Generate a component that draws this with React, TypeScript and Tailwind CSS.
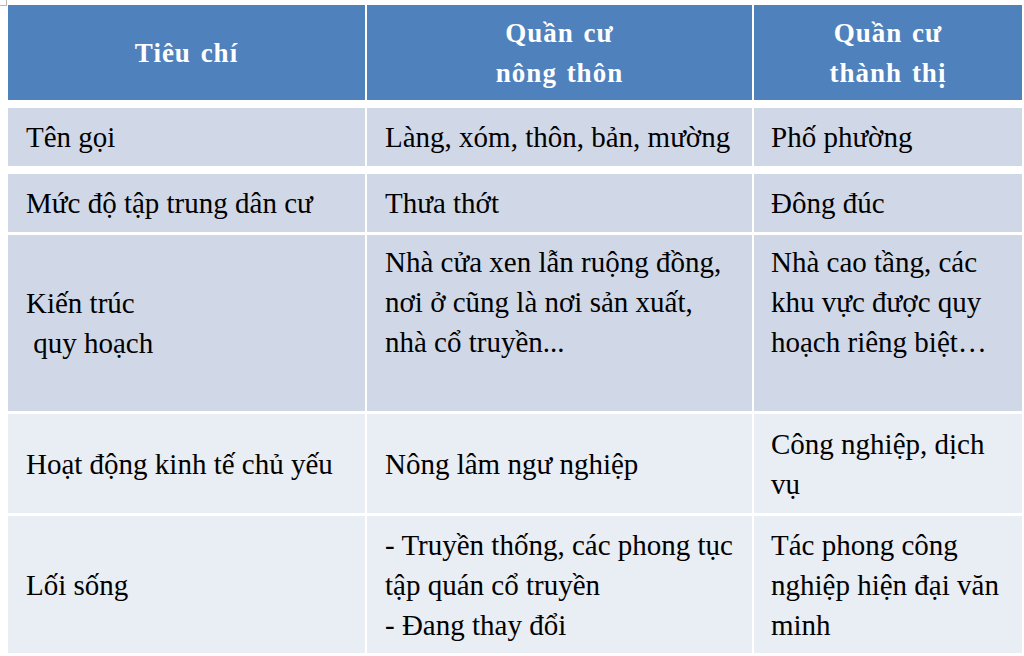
import React from 'react';

// ── Data ──────────────────────────────────────────────────────────────────

type Align = 'middle' | 'top';

interface Row {
  height: string;
  gap: string;
  bg: string;
  criterion: string[];
  rural: string[];
  urban: string[];
  align?: Align;
}

const ROWS: Row[] = [
  { height: 'h-[58px]', gap: 'mt-[8px]', bg: 'bg-[#d0d8e8]', criterion: ['Tên gọi'], rural: ['Làng, xóm, thôn, bản, mường'], urban: ['Phố phường'] },
  { height: 'h-[58px]', gap: 'mt-[8px]', bg: 'bg-[#d0d8e8]', criterion: ['Mức độ tập trung dân cư'], rural: ['Thưa thớt'], urban: ['Đông đúc'] },
  {
    height: 'h-[176px]', gap: 'mt-[3px]', bg: 'bg-[#d0d8e8]', align: 'top',
    criterion: ['Kiến trúc', '\u00a0quy hoạch'],
    rural: ['Nhà cửa xen lẫn ruộng đồng,', 'nơi ở cũng là nơi sản xuất,', 'nhà cổ truyền...'],
    urban: ['Nhà cao tầng, các', 'khu vực được quy', 'hoạch riêng biệt…'],
  },
  { height: 'h-[99px]', gap: 'mt-[3px]', bg: 'bg-[#e9edf4]', criterion: ['Hoạt động kinh tế chủ yếu'], rural: ['Nông lâm ngư nghiệp'], urban: ['Công nghiệp, dịch', 'vụ'] },
  {
    height: 'h-[137px]', gap: 'mt-[3px]', bg: 'bg-[#e9edf4]',
    criterion: ['Lối sống'],
    rural: ['- Truyền thống, các phong tục', 'tập quán cổ truyền', '- Đang thay đổi'],
    urban: ['Tác phong công', 'nghiệp hiện đại văn', 'minh'],
  },
];

const COLS = 'grid grid-cols-[357px_385px_268px] gap-x-[2px]';

function Cell({ lines, bg, align = 'middle', pad = 'pl-[18px]' }: { lines: string[]; bg: string; align?: Align; pad?: string }) {
  return (
    <div className={`${bg} flex flex-col ${pad} ${align === 'top' ? 'justify-start pt-[7px]' : 'justify-center'}`}>
      {lines.map((l, i) => (
        <div key={i} className="font-['Liberation_Serif'] text-[29px] whitespace-pre leading-[40px]">{l}</div>
      ))}
    </div>
  );
}

function HeadCell({ lines }: { lines: string[] }) {
  return (
    <div className="bg-[#4f81bd] flex flex-col items-center justify-center">
      {lines.map((l, i) => (
        <div key={i} className="font-['Liberation_Serif'] font-bold text-[27px] tracking-[1px] [word-spacing:2px] leading-[40px] whitespace-nowrap">{l}</div>
      ))}
    </div>
  );
}

export default function App() {
  return (
    <div className="relative w-[1024px] h-[656px] bg-white overflow-hidden pl-[8px] pt-[5px] text-black">
      {/* small corner mark at the top left */}
      <div className="absolute top-0 left-0 w-[7px] h-[6px] border-r border-b border-[#b8b8b8]" />
      <div className={`${COLS} h-[95px] text-white`}>
        <HeadCell lines={['Tiêu chí']} />
        <HeadCell lines={['Quần cư', 'nông thôn']} />
        <HeadCell lines={['Quần cư', 'thành thị']} />
      </div>
      {ROWS.map((r, i) => (
        <div key={i} className={`${COLS} ${r.height} ${r.gap}`}>
          <Cell lines={r.criterion} bg={r.bg} />
          <Cell lines={r.rural} bg={r.bg} align={r.align} />
          <Cell lines={r.urban} bg={r.bg} align={r.align} pad="pl-[17px]" />
        </div>
      ))}
    </div>
  );
}
